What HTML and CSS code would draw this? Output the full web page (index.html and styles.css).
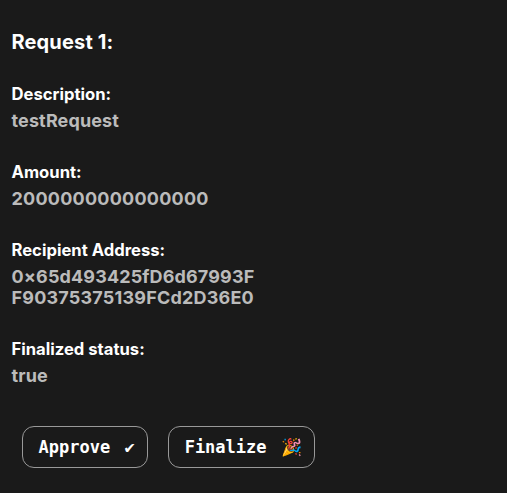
FILE: index.html
```html
<!DOCTYPE html>
<html lang="en">
<head>
<meta charset="utf-8">
<title>Request 1</title>
<link rel="stylesheet" href="styles.css">
</head>
<body>
<main class="request">
  <h2 class="request-title">Request 1:</h2>
  <section class="field"><h3 class="label">Description:</h3><p class="value">testRequest</p></section>
  <section class="field"><h3 class="label">Amount:</h3><p class="value amount">2000000000000000</p></section>
  <section class="field"><h3 class="label">Recipient Address:</h3><p class="value">0×65d493425fD6d67993F<br><span class="address-end">F90375375139FCd2D36E0</span></p></section>
  <section class="field"><h3 class="label">Finalized status:</h3><p class="value">true</p></section>
  <div class="actions">
    <button class="button">Approve <span class="icon">✔</span></button>
    <button class="button">Finalize <span class="icon">🎉</span></button>
  </div>
</main>
</body>
</html>
```
FILE: styles.css
```css
body { margin: 0; background: #1a1a1a; color: #fff; font-family: Inter, sans-serif; }
.request { padding: 30px 11.5px 0; }
.request-title { margin: 0 0 30px; font-size: 20px; line-height: 24px; font-weight: 700; letter-spacing: 0.15px; }
.field { margin-bottom: 30px; }
.label { margin: 0 0 6px; font-size: 16.64px; line-height: 20px; font-weight: 700; }
.value { margin: 0 0 31px; font-size: 18px; line-height: 21px; font-weight: 700; letter-spacing: 0.13px; color: #bbb; }
.amount { letter-spacing: 0.24px; }
.address-end { letter-spacing: 0.2px; }
.actions { display: flex; gap: 20px; padding-left: 10.5px; margin-top: 40px; }
.button { height: 42px; padding: 0 12.5px 0 15.5px; border: 1px solid #999; border-radius: 12px; background: transparent; color: #fff; font: bold 17px "DejaVu Sans Mono", monospace; white-space: nowrap; }
.icon { margin-left: 4px; }
```
